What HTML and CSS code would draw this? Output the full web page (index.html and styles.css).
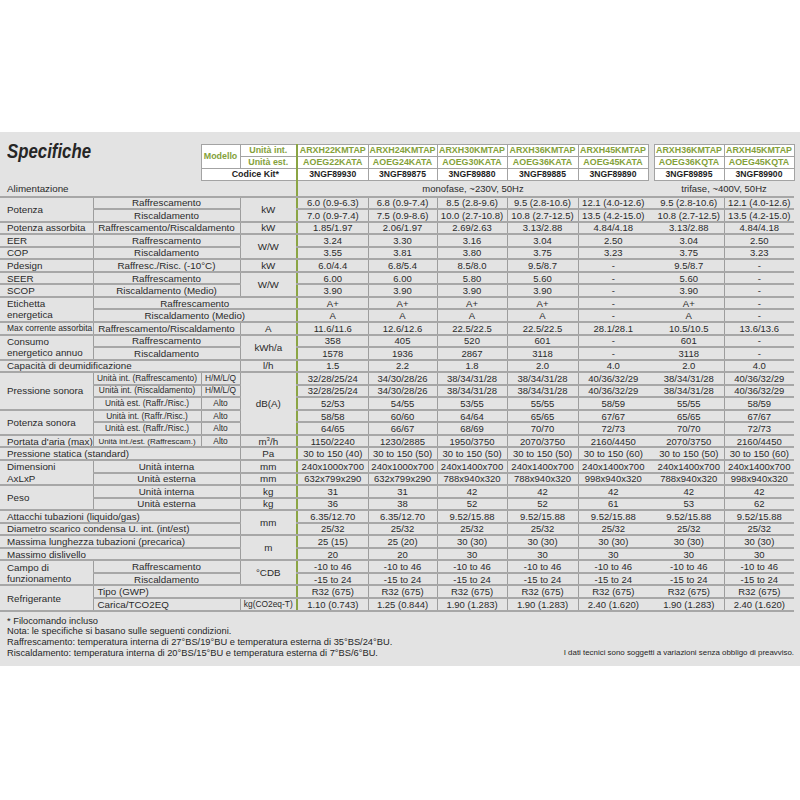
FILE: index.html
```html
<!DOCTYPE html>
<html lang="it">
<head>
<meta charset="utf-8">
<title>Specifiche</title>
<link rel="stylesheet" href="styles.css">
</head>
<body>
<div class="sheet">
<table class="spec">
<colgroup>
<col class="ca"><col class="cb"><col class="cc"><col class="cd">
<col class="w71"><col class="w69"><col class="w70"><col class="w71"><col class="w70">
<col class="wg"><col class="w70"><col class="w70">
</colgroup>
<tr class="hr">
<td class="ttlc" colspan="2" rowspan="3"><div class="ttl">Specifiche</div></td>
<td class="hd hgr" rowspan="2">Modello</td>
<td class="hd hgr">Unità int.</td>
<td class="hd hgr d1">ARXH22KMTAP</td><td class="hd hgr">ARXH24KMTAP</td><td class="hd hgr">ARXH30KMTAP</td><td class="hd hgr">ARXH36KMTAP</td><td class="hd hgr">ARXH45KMTAP</td>
<td class="g"></td>
<td class="hd hgr">ARXH36KMTAP</td><td class="hd hgr">ARXH45KMTAP</td>
</tr>
<tr class="hr">
<td class="hd hgr">Unità est.</td>
<td class="hd hgr d1">AOEG22KATA</td><td class="hd hgr">AOEG24KATA</td><td class="hd hgr">AOEG30KATA</td><td class="hd hgr">AOEG36KATA</td><td class="hd hgr">AOEG45KATA</td>
<td class="g"></td>
<td class="hd hgr">AOEG36KQTA</td><td class="hd hgr">AOEG45KQTA</td>
</tr>
<tr class="hr">
<td class="hd hk" colspan="2">Codice Kit*</td>
<td class="hd hc d1">3NGF89930</td><td class="hd hc">3NGF89875</td><td class="hd hc">3NGF89880</td><td class="hd hc">3NGF89885</td><td class="hd hc">3NGF89890</td>
<td class="g"></td>
<td class="hd hc">3NGF89895</td><td class="hd hc">3NGF89900</td>
</tr>

<tr class="al">
<td class="l" colspan="4">Alimentazione</td>
<td class="d1" colspan="5">monofase, ~230V, 50Hz</td>
<td class="g"></td>
<td class="t1" colspan="2">trifase, ~400V, 50Hz</td>
</tr>

<tr class="r">
<td class="l" rowspan="2">Potenza</td>
<td class="s" colspan="2">Raffrescamento</td>
<td class="u" rowspan="2">kW</td>
<td class="d1">6.0 (0.9-6.3)</td><td class="d">6.8 (0.9-7.4)</td><td class="d">8.5 (2.8-9.6)</td><td class="d">9.5 (2.8-10.6)</td><td class="d">12.1 (4.0-12.6)</td>
<td class="g"></td>
<td class="t1">9.5 (2.8-10.6)</td><td class="d">12.1 (4.0-12.6)</td>
</tr>
<tr class="r">
<td class="s" colspan="2">Riscaldamento</td>
<td class="d1">7.0 (0.9-7.4)</td><td class="d">7.5 (0.9-8.6)</td><td class="d">10.0 (2.7-10.8)</td><td class="d">10.8 (2.7-12.5)</td><td class="d">13.5 (4.2-15.0)</td>
<td class="g"></td>
<td class="t1">10.8 (2.7-12.5)</td><td class="d">13.5 (4.2-15.0)</td>
</tr>
<tr class="r">
<td class="l">Potenza assorbita</td>
<td class="s" colspan="2">Raffrescamento/Riscaldamento</td>
<td class="u">kW</td>
<td class="d1">1.85/1.97</td><td class="d">2.06/1.97</td><td class="d">2.69/2.63</td><td class="d">3.13/2.88</td><td class="d">4.84/4.18</td>
<td class="g"></td>
<td class="t1">3.13/2.88</td><td class="d">4.84/4.18</td>
</tr>
<tr class="r">
<td class="l">EER</td>
<td class="s" colspan="2">Raffrescamento</td>
<td class="u" rowspan="2">W/W</td>
<td class="d1">3.24</td><td class="d">3.30</td><td class="d">3.16</td><td class="d">3.04</td><td class="d">2.50</td>
<td class="g"></td>
<td class="t1">3.04</td><td class="d">2.50</td>
</tr>
<tr class="r">
<td class="l">COP</td>
<td class="s" colspan="2">Riscaldamento</td>
<td class="d1">3.55</td><td class="d">3.81</td><td class="d">3.80</td><td class="d">3.75</td><td class="d">3.23</td>
<td class="g"></td>
<td class="t1">3.75</td><td class="d">3.23</td>
</tr>
<tr class="r">
<td class="l">Pdesign</td>
<td class="s" colspan="2">Raffresc./Risc. (-10°C)</td>
<td class="u">kW</td>
<td class="d1">6.0/4.4</td><td class="d">6.8/5.4</td><td class="d">8.5/8.0</td><td class="d">9.5/8.7</td><td class="d">-</td>
<td class="g"></td>
<td class="t1">9.5/8.7</td><td class="d">-</td>
</tr>
<tr class="r">
<td class="l">SEER</td>
<td class="s" colspan="2">Raffrescamento</td>
<td class="u" rowspan="2">W/W</td>
<td class="d1">6.00</td><td class="d">6.00</td><td class="d">5.80</td><td class="d">5.60</td><td class="d">-</td>
<td class="g"></td>
<td class="t1">5.60</td><td class="d">-</td>
</tr>
<tr class="r">
<td class="l">SCOP</td>
<td class="s" colspan="2">Riscaldamento (Medio)</td>
<td class="d1">3.90</td><td class="d">3.90</td><td class="d">3.90</td><td class="d">3.90</td><td class="d">-</td>
<td class="g"></td>
<td class="t1">3.90</td><td class="d">-</td>
</tr>
<tr class="r">
<td class="l ml" rowspan="2">Etichetta<br>energetica</td>
<td class="s" colspan="3">Raffrescamento</td>
<td class="d1">A+</td><td class="d">A+</td><td class="d">A+</td><td class="d">A+</td><td class="d">-</td>
<td class="g"></td>
<td class="t1">A+</td><td class="d">-</td>
</tr>
<tr class="r">
<td class="s" colspan="3">Riscaldamento (Medio)</td>
<td class="d1">A</td><td class="d">A</td><td class="d">A</td><td class="d">A</td><td class="d">-</td>
<td class="g"></td>
<td class="t1">A</td><td class="d">-</td>
</tr>
<tr class="r">
<td class="l x">Max corrente assorbita</td>
<td class="s" colspan="2">Raffrescamento/Riscaldamento</td>
<td class="u">A</td>
<td class="d1">11.6/11.6</td><td class="d">12.6/12.6</td><td class="d">22.5/22.5</td><td class="d">22.5/22.5</td><td class="d">28.1/28.1</td>
<td class="g"></td>
<td class="t1">10.5/10.5</td><td class="d">13.6/13.6</td>
</tr>
<tr class="r">
<td class="l ml" rowspan="2">Consumo<br>energetico annuo</td>
<td class="s" colspan="2">Raffrescamento</td>
<td class="u" rowspan="2">kWh/a</td>
<td class="d1">358</td><td class="d">405</td><td class="d">520</td><td class="d">601</td><td class="d">-</td>
<td class="g"></td>
<td class="t1">601</td><td class="d">-</td>
</tr>
<tr class="r">
<td class="s" colspan="2">Riscaldamento</td>
<td class="d1">1578</td><td class="d">1936</td><td class="d">2867</td><td class="d">3118</td><td class="d">-</td>
<td class="g"></td>
<td class="t1">3118</td><td class="d">-</td>
</tr>
<tr class="r">
<td class="l" colspan="3">Capacità di deumidificazione</td>
<td class="u">l/h</td>
<td class="d1">1.5</td><td class="d">2.2</td><td class="d">1.8</td><td class="d">2.0</td><td class="d">4.0</td>
<td class="g"></td>
<td class="t1">2.0</td><td class="d">4.0</td>
</tr>
<tr class="r">
<td class="l" rowspan="3">Pressione sonora</td>
<td class="s x">Unità int. (Raffrescamento)</td>
<td class="c x">H/M/L/Q</td>
<td class="u" rowspan="5">dB(A)</td>
<td class="d1">32/28/25/24</td><td class="d">34/30/28/26</td><td class="d">38/34/31/28</td><td class="d">38/34/31/28</td><td class="d">40/36/32/29</td>
<td class="g"></td>
<td class="t1">38/34/31/28</td><td class="d">40/36/32/29</td>
</tr>
<tr class="r">
<td class="s x">Unità int. (Riscaldamento)</td>
<td class="c x">H/M/L/Q</td>
<td class="d1">32/28/25/24</td><td class="d">34/30/28/26</td><td class="d">38/34/31/28</td><td class="d">38/34/31/28</td><td class="d">40/36/32/29</td>
<td class="g"></td>
<td class="t1">38/34/31/28</td><td class="d">40/36/32/29</td>
</tr>
<tr class="r">
<td class="s x">Unità est. (Raffr./Risc.)</td>
<td class="c x">Alto</td>
<td class="d1">52/53</td><td class="d">54/55</td><td class="d">53/55</td><td class="d">55/55</td><td class="d">58/59</td>
<td class="g"></td>
<td class="t1">55/55</td><td class="d">58/59</td>
</tr>
<tr class="r">
<td class="l" rowspan="2">Potenza sonora</td>
<td class="s x">Unità int. (Raffr./Risc.)</td>
<td class="c x">Alto</td>
<td class="d1">58/58</td><td class="d">60/60</td><td class="d">64/64</td><td class="d">65/65</td><td class="d">67/67</td>
<td class="g"></td>
<td class="t1">65/65</td><td class="d">67/67</td>
</tr>
<tr class="r">
<td class="s x">Unità est. (Raffr./Risc.)</td>
<td class="c x">Alto</td>
<td class="d1">64/65</td><td class="d">66/67</td><td class="d">68/69</td><td class="d">70/70</td><td class="d">72/73</td>
<td class="g"></td>
<td class="t1">70/70</td><td class="d">72/73</td>
</tr>
<tr class="r">
<td class="l">Portata d'aria (max)</td>
<td class="s xs">Unità int./est. (Raffrescam.)</td>
<td class="c x">Alto</td>
<td class="u">m<sup>3</sup>/h</td>
<td class="d1">1150/2240</td><td class="d">1230/2885</td><td class="d">1950/3750</td><td class="d">2070/3750</td><td class="d">2160/4450</td>
<td class="g"></td>
<td class="t1">2070/3750</td><td class="d">2160/4450</td>
</tr>
<tr class="r">
<td class="l" colspan="3">Pressione statica (standard)</td>
<td class="u">Pa</td>
<td class="d1">30 to 150 (40)</td><td class="d">30 to 150 (50)</td><td class="d">30 to 150 (50)</td><td class="d">30 to 150 (50)</td><td class="d">30 to 150 (60)</td>
<td class="g"></td>
<td class="t1">30 to 150 (50)</td><td class="d">30 to 150 (60)</td>
</tr>
<tr class="r">
<td class="l ml" rowspan="2">Dimensioni<br>AxLxP</td>
<td class="s" colspan="2">Unità interna</td>
<td class="u">mm</td>
<td class="d1">240x1000x700</td><td class="d">240x1000x700</td><td class="d">240x1400x700</td><td class="d">240x1400x700</td><td class="d">240x1400x700</td>
<td class="g"></td>
<td class="t1">240x1400x700</td><td class="d">240x1400x700</td>
</tr>
<tr class="r">
<td class="s" colspan="2">Unità esterna</td>
<td class="u">mm</td>
<td class="d1">632x799x290</td><td class="d">632x799x290</td><td class="d">788x940x320</td><td class="d">788x940x320</td><td class="d">998x940x320</td>
<td class="g"></td>
<td class="t1">788x940x320</td><td class="d">998x940x320</td>
</tr>
<tr class="r">
<td class="l" rowspan="2">Peso</td>
<td class="s" colspan="2">Unità interna</td>
<td class="u">kg</td>
<td class="d1">31</td><td class="d">31</td><td class="d">42</td><td class="d">42</td><td class="d">42</td>
<td class="g"></td>
<td class="t1">42</td><td class="d">42</td>
</tr>
<tr class="r">
<td class="s" colspan="2">Unità esterna</td>
<td class="u">kg</td>
<td class="d1">36</td><td class="d">38</td><td class="d">52</td><td class="d">52</td><td class="d">61</td>
<td class="g"></td>
<td class="t1">53</td><td class="d">62</td>
</tr>
<tr class="r">
<td class="l" colspan="3">Attacchi tubazioni (liquido/gas)</td>
<td class="u" rowspan="2">mm</td>
<td class="d1">6.35/12.70</td><td class="d">6.35/12.70</td><td class="d">9.52/15.88</td><td class="d">9.52/15.88</td><td class="d">9.52/15.88</td>
<td class="g"></td>
<td class="t1">9.52/15.88</td><td class="d">9.52/15.88</td>
</tr>
<tr class="r">
<td class="l" colspan="3">Diametro scarico condensa U. int. (int/est)</td>
<td class="d1">25/32</td><td class="d">25/32</td><td class="d">25/32</td><td class="d">25/32</td><td class="d">25/32</td>
<td class="g"></td>
<td class="t1">25/32</td><td class="d">25/32</td>
</tr>
<tr class="r">
<td class="l" colspan="3">Massima lunghezza tubazioni (precarica)</td>
<td class="u" rowspan="2">m</td>
<td class="d1">25 (15)</td><td class="d">25 (20)</td><td class="d">30 (30)</td><td class="d">30 (30)</td><td class="d">30 (30)</td>
<td class="g"></td>
<td class="t1">30 (30)</td><td class="d">30 (30)</td>
</tr>
<tr class="r">
<td class="l" colspan="3">Massimo dislivello</td>
<td class="d1">20</td><td class="d">20</td><td class="d">30</td><td class="d">30</td><td class="d">30</td>
<td class="g"></td>
<td class="t1">30</td><td class="d">30</td>
</tr>
<tr class="r">
<td class="l ml" rowspan="2">Campo di<br>funzionamento</td>
<td class="s" colspan="2">Raffrescamento</td>
<td class="u" rowspan="2">°CDB</td>
<td class="d1">-10 to 46</td><td class="d">-10 to 46</td><td class="d">-10 to 46</td><td class="d">-10 to 46</td><td class="d">-10 to 46</td>
<td class="g"></td>
<td class="t1">-10 to 46</td><td class="d">-10 to 46</td>
</tr>
<tr class="r">
<td class="s" colspan="2">Riscaldamento</td>
<td class="d1">-15 to 24</td><td class="d">-15 to 24</td><td class="d">-15 to 24</td><td class="d">-15 to 24</td><td class="d">-15 to 24</td>
<td class="g"></td>
<td class="t1">-15 to 24</td><td class="d">-15 to 24</td>
</tr>
<tr class="r">
<td class="l" rowspan="2">Refrigerante</td>
<td class="s sl" colspan="3">Tipo (GWP)</td>
<td class="d1">R32 (675)</td><td class="d">R32 (675)</td><td class="d">R32 (675)</td><td class="d">R32 (675)</td><td class="d">R32 (675)</td>
<td class="g"></td>
<td class="t1">R32 (675)</td><td class="d">R32 (675)</td>
</tr>
<tr class="r">
<td class="s sl" colspan="2">Carica/TCO2EQ</td>
<td class="u x">kg(CO2eq-T)</td>
<td class="d1">1.10 (0.743)</td><td class="d">1.25 (0.844)</td><td class="d">1.90 (1.283)</td><td class="d">1.90 (1.283)</td><td class="d">2.40 (1.620)</td>
<td class="g"></td>
<td class="t1">1.90 (1.283)</td><td class="d">2.40 (1.620)</td>
</tr>
</table>

<div class="foot">
<div class="notes">
<div>* Filocomando incluso</div>
<div>Nota: le specifiche si basano sulle seguenti condizioni.</div>
<div>Raffrescamento: temperatura interna di 27°BS/19°BU e temperatura esterna di 35°BS/24°BU.</div>
<div>Riscaldamento: temperatura interna di 20°BS/15°BU e temperatura esterna di 7°BS/6°BU.</div>
</div>
<div class="disc">I dati tecnici sono soggetti a variazioni senza obbligo di preavviso.</div>
</div>
</div>
</body>
</html>
```

FILE: styles.css
```css
* { box-sizing: border-box; }

html, body {
  margin: 0;
  padding: 0;
  background: #ffffff;
}

body {
  font-family: "Liberation Sans", Arial, sans-serif;
  color: #2a2a2a;
}

.sheet {
  margin-top: 132px;
  height: 534px;
  padding-top: 12px;
  background: #e3e3e3;
}

.spec {
  border-collapse: collapse;
  table-layout: fixed;
  width: 794px;
  font-size: 9.5px;
}

.ca { width: 93px; }
.cb { width: 108px; }
.cc { width: 39px; }
.cd { width: 57px; }
.w69 { width: 69px; }
.w70 { width: 70px; }
.w71 { width: 71px; }
.wg { width: 6px; }

.spec td {
  padding: 0;
  line-height: 9px;
  white-space: nowrap;
  text-align: center;
  vertical-align: middle;
  overflow: hidden;
}

.spec tr.hr { height: 12px; }
.spec tr.al { height: 16px; }
.spec tr.r { height: 12.55px; }

.spec tr.al td,
.spec tr.r td {
  border-bottom: 2px solid #a7a7a7;
}

.spec td.ttlc {
  text-align: left;
  vertical-align: top;
  border: none;
  overflow: visible;
}

.ttl {
  display: inline-block;
  margin: -5px 0 0 7px;
  font-size: 21px;
  line-height: 21px;
  font-weight: bold;
  font-style: italic;
  color: #262626;
  transform: scaleX(0.8);
  transform-origin: left center;
}

.spec td.hd {
  background: #ffffff;
  border: 1px solid #a3a3a3;
  font-weight: bold;
  font-size: 8.9px;
}

.spec td.hgr { color: #84a13a; }
.spec td.hc { color: #1e1e1e; font-size: 8.6px; }
.spec td.hk {
  color: #1e1e1e;
  text-align: right;
  padding-right: 17px;
}

.spec td.l {
  text-align: left;
  padding-left: 7px;
  font-size: 9.8px;
}

.spec td.s,
.spec td.u {
  font-size: 9.8px;
}

.spec td.ml { line-height: 11.4px; }

.spec td.s,
.spec td.c,
.spec td.u,
.spec td.d {
  border-left: 1px solid #9d9d9d;
}

.spec td.sl {
  text-align: left;
  padding-left: 4px;
}

.spec td.x { font-size: 8.4px; }
.spec td.xs { font-size: 8px; }

.spec td.d1 { border-left: 2px solid #8ba544; }
.spec td.t1 { border-left: none; }
.spec td.g { border: none; background: transparent; }

.spec sup {
  font-size: 6px;
  line-height: 0;
  vertical-align: 4px;
}

.foot {
  display: flex;
  justify-content: space-between;
  align-items: flex-end;
  width: 794px;
  margin-top: 4px;
  padding-left: 7px;
  font-size: 9.3px;
  line-height: 10.7px;
  color: #262626;
}

.notes {
  flex: none;
  white-space: nowrap;
}

.disc {
  flex: none;
  white-space: nowrap;
  font-size: 7.9px;
  line-height: 10px;
}
```
